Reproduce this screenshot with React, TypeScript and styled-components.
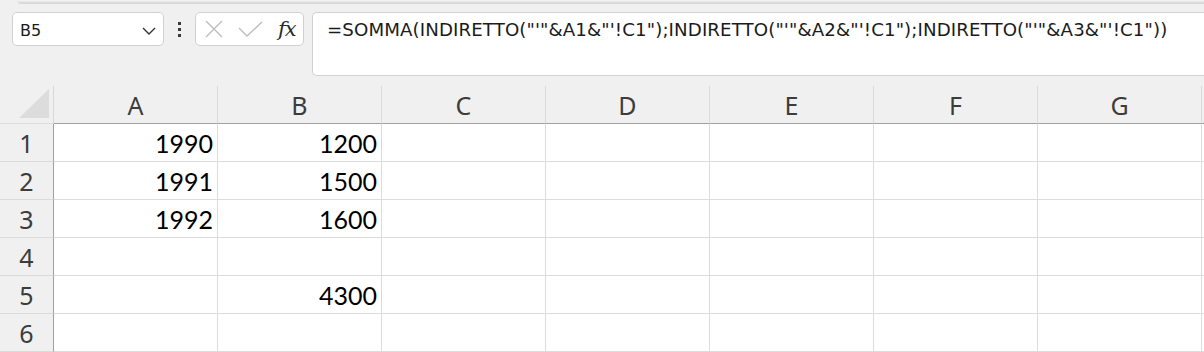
import styled, { createGlobalStyle } from 'styled-components';

const GlobalStyle = createGlobalStyle`
  html, body {
    margin: 0;
    padding: 0;
    background: #f0f0f0;
    overflow: hidden;
  }
  * {
    box-sizing: border-box;
  }
`;

// last column only peeks in at the right edge, so no label for it
const columns = ['A', 'B', 'C', 'D', 'E', 'F', 'G', ''];

const rows: { a?: string; b?: string }[] = [
  { a: '1990', b: '1200' },
  { a: '1991', b: '1500' },
  { a: '1992', b: '1600' },
  {},
  { b: '4300' },
  {},
];

const formula = `=SOMMA(INDIRETTO("'"&A1&"'!C1");INDIRETTO("'"&A2&"'!C1");INDIRETTO("'"&A3&"'!C1"))`;

const App = () => {
  return (
    <Page>
      <GlobalStyle />
      <RibbonEdge />
      <Toolbar>
        <NameBox>
          <span>B5</span>
          <svg width="14" height="8" viewBox="0 0 14 8">
            <path d="M1 1 L7 7 L13 1" fill="none" stroke="#333" strokeWidth="1.4" />
          </svg>
        </NameBox>
        <Dots>
          <i />
          <i />
          <i />
        </Dots>
        <FxBox>
          <svg width="18" height="18" viewBox="0 0 18 18">
            <path d="M1 1 L17 17 M17 1 L1 17" stroke="#bdbdbd" strokeWidth="1.4" fill="none" />
          </svg>
          <svg width="25" height="16" viewBox="0 0 25 16">
            <path d="M1 7 L9 15 L24 1" stroke="#bdbdbd" strokeWidth="1.4" fill="none" />
          </svg>
          <FxLabel>fx</FxLabel>
        </FxBox>
        <FormulaBar>{formula}</FormulaBar>
      </Toolbar>
      <Sheet>
        <Corner>
          <svg width="31" height="30" viewBox="0 0 31 30">
            <path d="M30 0 L30 29 L0 29 Z" fill="#dcdcdc" />
          </svg>
        </Corner>
        {columns.map((c, i) => (
          <ColHeader key={i}>{c}</ColHeader>
        ))}
        {rows.map((r, i) => (
          <Row key={i} r={r} n={i + 1} />
        ))}
      </Sheet>
    </Page>
  );
};

const Row = ({ r, n }: { r: { a?: string; b?: string }; n: number }) => (
  <>
    <RowHeader>{n}</RowHeader>
    <Cell>{r.a}</Cell>
    <Cell>{r.b}</Cell>
    {columns.slice(2).map((c, i) => (
      <Cell key={i} />
    ))}
  </>
);

export default App;

const Page = styled.div`
  width: 1204px;
  height: 352px;
  overflow: hidden;
  background: #f0f0f0;
`;

const RibbonEdge = styled.div`
  height: 4px;
  margin-left: 17px;
  border-bottom-left-radius: 4px;
  background: linear-gradient(#f7f7f7 0%, #e2e2e2 50%, #d4d4d4 100%);
`;

const Toolbar = styled.div`
  display: flex;
  align-items: flex-start;
  padding: 8px 0 0 12px;
  height: 82px;
`;

const NameBox = styled.div`
  width: 152px;
  height: 34px;
  flex-shrink: 0;
  display: flex;
  align-items: flex-start;
  justify-content: space-between;
  padding: 8px 7px 0 7px;
  background: #ffffff;
  border: 1px solid #d1d1d1;
  border-radius: 5px;
  font-family: 'DejaVu Sans', sans-serif;
  font-size: 16px;
  line-height: 20px;
  color: #1b1b1b;

  svg {
    margin-top: 6px;
  }
`;

const Dots = styled.div`
  width: 31px;
  flex-shrink: 0;
  display: flex;
  flex-direction: column;
  align-items: center;
  gap: 3px;
  padding-top: 10px;

  i {
    display: block;
    width: 3px;
    height: 3px;
    background: #3a3a3a;
  }
`;

const FxBox = styled.div`
  width: 109px;
  height: 34px;
  flex-shrink: 0;
  display: flex;
  align-items: center;
  padding-left: 9px;
  gap: 14px;
  background: #ffffff;
  border: 1px solid #d1d1d1;
  border-radius: 5px;

  svg:nth-child(2) {
    margin-left: 1px;
  }
`;

const FxLabel = styled.span`
  font-family: 'DejaVu Serif', serif;
  font-style: italic;
  font-size: 21px;
  line-height: 20px;
  color: #2b2b2b;
  margin-left: 1px;
  letter-spacing: -1px;
`;

const FormulaBar = styled.div`
  flex: 1;
  margin-left: 8px;
  height: 64px;
  padding: 7px 0 0 14px;
  margin-right: -12px;
  background: #ffffff;
  border: 1px solid #d1d1d1;
  border-right: none;
  border-radius: 5px 0 0 5px;
  font-family: 'DejaVu Sans', sans-serif;
  font-size: 18.2px;
  letter-spacing: 0.1px;
  line-height: 20px;
  color: #1b1b1b;
  white-space: nowrap;
  overflow: hidden;
`;

const Sheet = styled.div`
  display: grid;
  grid-template-columns: 54px repeat(8, 164px);
  grid-auto-rows: 38px;
`;

const Corner = styled.div`
  display: flex;
  align-items: flex-end;
  justify-content: flex-end;
  padding: 0 3px 4px 0;
  border-right: 1px solid #d8d8d8;
  border-bottom: 1px solid #dcdcdc;
`;

const ColHeader = styled.div`
  border-right: 1px solid #dadada;
  border-bottom: 1px solid #a0a0a0;
  background: #f0f0f0;
  text-align: center;
  font-family: 'Noto Sans', sans-serif;
  font-size: 25px;
  line-height: 37px;
  color: #3c3c3c;
  padding-top: 1px;
`;

const RowHeader = styled.div`
  border-right: 1px solid #a0a0a0;
  border-bottom: 1px solid #dadada;
  background: #f0f0f0;
  text-align: center;
  font-family: 'Noto Sans', sans-serif;
  font-size: 25px;
  line-height: 37px;
  color: #3c3c3c;
  padding-top: 1px;
`;

const Cell = styled.div`
  border-right: 1px solid #dcdcdc;
  border-bottom: 1px solid #dcdcdc;
  background: #ffffff;
  text-align: right;
  padding: 1px 4px 0 0;
  font-family: Lato, sans-serif;
  font-size: 25px;
  line-height: 37px;
  color: #000000;
`;
